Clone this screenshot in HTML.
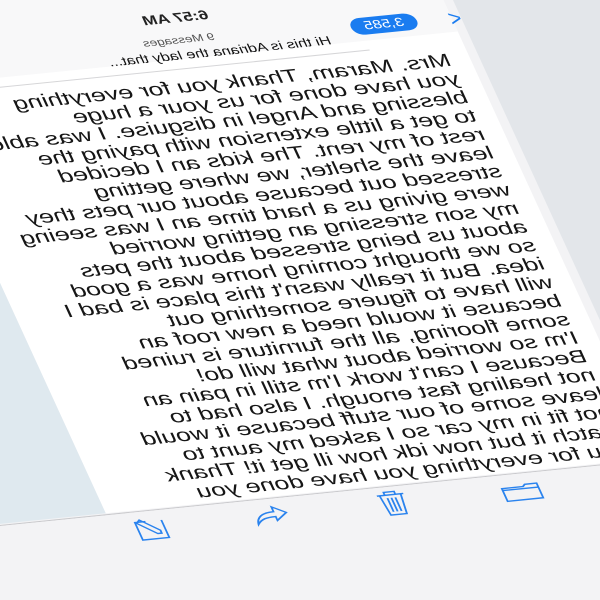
<!DOCTYPE html>
<html><head><meta charset="utf-8"><style>
html,body{margin:0;padding:0;width:600px;height:600px;overflow:hidden;background:#f3f3f5}
#flip{position:absolute;left:0;top:0;width:600px;height:600px;transform:scaleX(-1);transform-origin:300px 300px;overflow:hidden}
#sc{position:absolute;left:0;top:0;width:10px;height:10px;transform:matrix(1.32,0.133,-0.447,0.974,154,51);transform-origin:0 0}
.a{position:absolute}
#txt{left:0;top:0;font:18px/19px "Liberation Sans",sans-serif;color:#161616;white-space:pre;transform:scaleX(1.09);transform-origin:0 0}
</style></head><body>
<div id="flip"><div id="sc">
  <div class="a" style="left:-400px;top:-200px;width:1200px;height:900px;background:#f3f3f5"></div>
  <div class="a" style="left:-400px;top:-200px;width:378px;height:620px;background:#e3e6ea"></div>
  <div class="a" style="left:-15px;top:-200px;width:415px;height:620px;background:#fff"></div>
  <div class="a" style="left:400px;top:-200px;width:400px;height:620px;background:#dfe9ef"></div>
  <div class="a" style="left:-15px;top:-200px;width:800px;height:182px;background:#f8f8f9"></div>
  <div class="a" style="left:-22px;top:421px;width:900px;height:1px;background:#c9c9cc"></div>
  <div class="a" style="left:-400px;top:422px;width:1200px;height:400px;background:#f3f3f5"></div>
  <!-- header -->
  <div class="a" style="left:-24px;top:-42px;font:22px/22px 'Liberation Sans',sans-serif;color:#1a7cf0;transform:scaleX(0.7)">&lt;</div>
  <div class="a" style="left:11px;top:-41px;width:50px;height:17px;border-radius:9px;background:#1a7cf0;color:#fff;font:12px/17px 'Liberation Sans',sans-serif;text-align:center">3,585</div>
  <div class="a" style="left:150px;top:-67px;width:70px;text-align:center;font:bold 13px/16px 'Liberation Sans',sans-serif;color:#222">6:57 AM</div>
  <div class="a" style="left:155px;top:-42px;width:70px;text-align:center;font:10px/12px 'Liberation Sans',sans-serif;color:#555">9 Messages</div>
  <div class="a" style="left:80px;top:-29px;font:12px/14px 'Liberation Sans',sans-serif;color:#111;white-space:nowrap">Hi this is Adriana the lady that...</div>
  <div class="a" style="left:55px;top:-9px;width:400px;height:1px;background:#d6d6d8"></div>
  <div class="a" style="left:330px;top:-35px;font:13px/14px 'Liberation Sans',sans-serif;color:#555">A</div>
  <div id="txt" class="a">Mrs. Maram, Thank you for everything
you have done for us your a huge
blessing and Angel in disguise. I was able
to get a little extension with paying the
rest of my rent. The kids an I decided
leave the shelter, we where getting
stressed out because about our pets they
were giving us a hard time an I was seeing
my son stressing an getting worried
about us being stressed about the pets
so we thought coming home was a good
idea. But it really wasn't this place is bad I
will have to figuere something out
because it would need a new roof an
some flooring, all the furniture is ruined
I'm so worried about what will do!
Because I can't work I'm still in pain an
not healing fast enough. I also had to
leave some of our stuff because it would
not fit in my car so I asked my aunt to
watch it but now idk how ill get it! Thank
you for everything you have done you</div>
  <!-- toolbar icons -->
  <svg class="a" style="left:76px;top:427px" width="32" height="24" viewBox="0 0 32 24" fill="none" stroke="#2a83ee" stroke-width="1.4"><path d="M2 6h9l2 2h16v13H2z M2 10h27"/></svg>
  <svg class="a" style="left:175px;top:424px" width="26" height="28" viewBox="0 0 26 28" fill="none" stroke="#2a83ee" stroke-width="1.4"><path d="M3 6h20 M9 6V3h8v3 M5 6l2 20h12l2-20 M10 9v14 M13 9v14 M16 9v14"/></svg>
  <svg class="a" style="left:266px;top:427px" width="30" height="22" viewBox="0 0 30 22" fill="none" stroke="#2a83ee" stroke-width="1.4"><path d="M12 3L3 10l9 7v-4c7 0 11 1 15 6-1-7-6-11-15-11z"/></svg>
  <svg class="a" style="left:356px;top:424px" width="30" height="28" viewBox="0 0 30 28" fill="none" stroke="#2a83ee" stroke-width="1.4"><path d="M6 8v18h20V8H18 M10 18l12-12 3 3-12 12h-3z"/></svg>
</div></div>
</body></html>
